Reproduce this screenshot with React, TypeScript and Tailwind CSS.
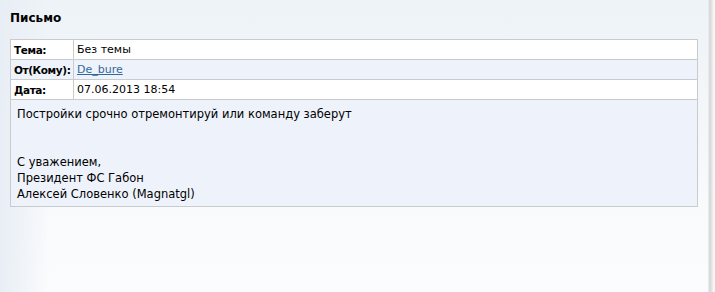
export default function App() {
  const rows = [
    { label: "Тема:", value: "Без темы", bg: "bg-white" },
    { label: "От(Кому):", value: "De_bure", link: true, bg: "bg-[#eef3fb]" },
    { label: "Дата:", value: "07.06.2013 18:54", bg: "bg-white" },
  ];

  return (
    <div className="flex h-[292px] w-[715px] overflow-hidden bg-[linear-gradient(to_bottom,#eef3f7,#f8fafc_70%,#fbfcfd)] font-['DejaVu_Sans',sans-serif] text-black">
      <div className="flex-1 bg-[linear-gradient(to_right,#e8eef5,transparent_50px)] pl-[10px] pr-[10px] pt-[10px]">
        <h1 className="text-[12px] font-bold leading-[16px]">Письмо</h1>
        <table className="mt-[13px] w-[688px] table-fixed border-collapse border border-[#c9cbcd] text-[11px]">
          <colgroup>
            <col className="w-[63px]" />
            <col />
          </colgroup>
          <tbody>
            {rows.map((r) => (
              <tr key={r.label} className={r.bg}>
                <td className="h-[20px] border border-[#c9cbcd] px-[3px] text-[10.5px] font-bold leading-[14px] tracking-[-0.4px] whitespace-nowrap">
                  {r.label}
                </td>
                <td className="border border-[#c9cbcd] px-[3px] leading-[14px]">
                  {r.link ? (
                    <a href="#" className="text-[#35679b] underline">
                      {r.value}
                    </a>
                  ) : (
                    r.value
                  )}
                </td>
              </tr>
            ))}
            <tr className="bg-[#eef3fb]">
              <td colSpan={2} className="h-[107px] px-[6px] pt-[6px] align-top text-[11.5px] leading-[16px]">
                <div>Постройки срочно отремонтируй или команду заберут</div>
                <div className="h-[16px]" />
                <div className="h-[16px]" />
                <div>С уважением,</div>
                <div>Президент ФС Габон</div>
                <div>Алексей Словенко (Magnatgl)</div>
              </td>
            </tr>
          </tbody>
        </table>
      </div>
      <div className="w-[6px] bg-[linear-gradient(to_right,#eef1f4,#d6d6d6_35%,#e2e2e2_70%,#eeeeee)]" />
      <div className="w-[2px] bg-[#f3f5f7]" />
    </div>
  );
}
